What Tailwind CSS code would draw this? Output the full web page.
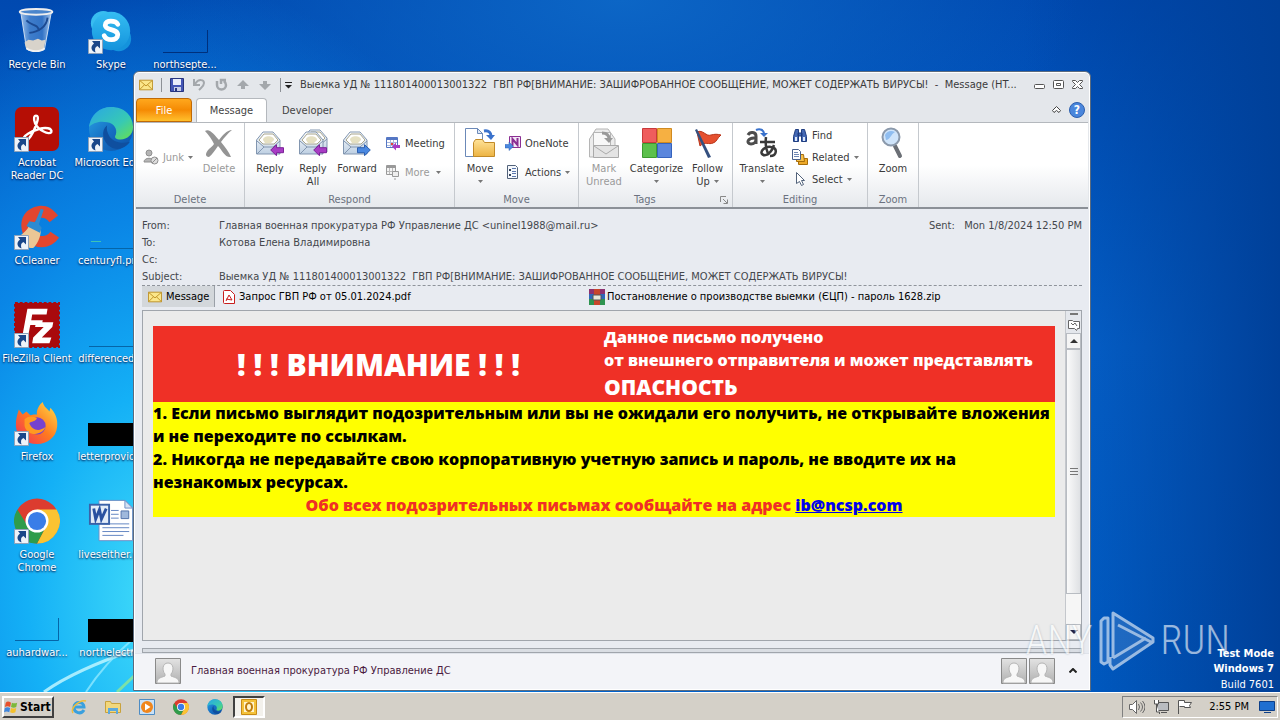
<!DOCTYPE html>
<html lang="en">
<head>
<meta charset="utf-8">
<title>Message (HTML)</title>
<script src="https://cdn.jsdelivr.net/npm/@tailwindcss/browser@4"></script>
</head>
<body class="relative flex h-screen flex-col overflow-hidden bg-[#0058c4] font-['DejaVu_Sans_Condensed','Noto_Sans',sans-serif] text-[11px] leading-[13px] text-[#3b3b3b]">

<svg class="absolute size-0">
  <defs>
    <linearGradient id="gEdge" x1="0" y1="0" x2="1" y2="1"><stop offset="0" stop-color="#2ba7e8"/><stop offset=".5" stop-color="#1670c4"/><stop offset="1" stop-color="#0c4fa5"/></linearGradient>
    <linearGradient id="gEdgeTop" x1="0" y1="0" x2="1" y2="1"><stop offset="0" stop-color="#2aa6e6"/><stop offset=".6" stop-color="#37c9b4"/><stop offset="1" stop-color="#69e04e"/></linearGradient>
    <linearGradient id="gSkype" x1="0" y1="0" x2="0" y2="1"><stop offset="0" stop-color="#35bdf2"/><stop offset="1" stop-color="#1493dc"/></linearGradient>
    <linearGradient id="gFox" x1="0" y1="1" x2="1" y2="0"><stop offset="0" stop-color="#f02a5e"/><stop offset=".5" stop-color="#ff7a1f"/><stop offset="1" stop-color="#ffe14a"/></linearGradient>
    <linearGradient id="gEnv" x1="0" y1="0" x2="0" y2="1"><stop offset="0" stop-color="#fdfeff"/><stop offset="1" stop-color="#bdcfe2"/></linearGradient>
    <linearGradient id="gFolder" x1="0" y1="0" x2="0" y2="1"><stop offset="0" stop-color="#ffe399"/><stop offset="1" stop-color="#ecb342"/></linearGradient>
    <linearGradient id="gGlass" x1="0" y1="0" x2="1" y2="0"><stop offset="0" stop-color="#b5d2f2"/><stop offset=".3" stop-color="#4a86cf"/><stop offset=".7" stop-color="#3a78c8"/><stop offset="1" stop-color="#c4dcf5"/></linearGradient>
    <linearGradient id="gPerson" x1="0" y1="0" x2="0" y2="1"><stop offset="0" stop-color="#e3e3e3"/><stop offset="1" stop-color="#b0b0b0"/></linearGradient>

    <symbol id="shortcut" viewBox="0 0 15 15"><path fill="#eef3f9" stroke="#8fa3bb" d="M.5.5h14v14H.5z"/><path fill="#1a4789" d="M4 2h8v7.500L9.500 7C7 8 6.500 10 7.500 13.500 3 12 2 7.500 6 4.500z"/></symbol>
    <symbol id="bin" viewBox="0 0 48 48"><path fill="url(#gGlass)" fill-opacity=".85" stroke="#cfe0f2" d="M7 4l6 38c1 4 18 4 19 0l7-38z"/><path fill="none" stroke="#1c4a92" stroke-width="2" d="M16 26c9-1 18-6 19-16M13 13c5 6 12 3 13 11"/><path fill="#d8d3cb" d="M11 36l4-3 5 1 5-2 4 2 4-1-2 10c-3 3-14 3-18 0z"/><path fill="none" stroke="#f1f1f1" stroke-width="2" d="M13 42c5 4 15 4 19 0"/><ellipse cx="23" cy="4" rx="17" ry="3" fill="#4b86cc" stroke="#eee" stroke-width="2"/></symbol>
    <symbol id="skype" viewBox="0 0 48 48"><circle cx="16" cy="16" r="13" fill="#38bdf0"/><circle cx="32" cy="32" r="13" fill="#1493dc"/><circle cx="24" cy="24" r="20" fill="url(#gSkype)"/><path fill="none" stroke="#fff" stroke-width="5" stroke-linecap="round" d="M31 17c-2-4-13-5-13 1 0 6 13 3 13 10 0 7-12 6-14 1"/></symbol>
    <symbol id="acrobat" viewBox="0 0 48 48"><rect x="1" y="1" width="46" height="46" rx="7" fill="#b50e05"/><path fill="none" stroke="#fff" stroke-width="2.500" d="M10 36c-2-5 9-10 16-12s14-1 13 3c-2 4-14-2-17-9-2-5-1-8 1-8 4 0 1 9-3 17-3 6-7 11-10 9z"/></symbol>
    <symbol id="edge" viewBox="0 0 48 48"><circle cx="24" cy="24" r="23" fill="url(#gEdge)"/><path fill="url(#gEdgeTop)" d="M1 22C3 9 12 1 24 1c14 0 23 9 23 21 0 8-6 13-13 13-5 0-7-2-5-5 2-6-2-12-9-13C12 15 4 18 1 22z"/><path fill="#0f4f9f" d="M20 20c-7 5-5 18 4 23 7 4 15 1 20-6-8 3-18 1-22-6-2-4-3-7-2-11z"/></symbol>
    <symbol id="ccleaner" viewBox="0 0 48 48"><path fill="#e2462f" d="M46 12C40 4 33 1 26 2 12 4 6 15 8 26c2 12 10 19 21 19 8 0 14-4 18-10l-9-6c-3 4-7 5-11 4-6-2-8-8-6-13 3-7 11-8 16-1z"/><path fill="#ebc795" d="M2 36c7-5 13-9 14-15l12 6c0 8-4 15-8 19C13 46 6 42 2 36z"/><path fill="#2c8bd2" d="M13 23l3-5 6 1 6-14 3 1-5 15 3 4-2 5z"/></symbol>
    <symbol id="filezilla" viewBox="0 0 48 48"><path fill="#a90a0d" stroke="#a90a0d" stroke-width="2" stroke-dasharray="3 2" d="M1 1h46v46H1z"/><path fill="#fff" d="M14 7h21l-1 6H19l-1 6h12l-1 5H17l-3 15H8zM23 21h18l-1 5-11 11h10l-2 6H19l1-6 11-11h-9z"/></symbol>
    <symbol id="firefox" viewBox="0 0 48 48"><path fill="url(#gFox)" d="M3 17l2-7 4 5 4-3 4 4c2-1 4-1 7-1-1-5 3-11 6-13 1 5 5 7 7 10l1-4c5 5 8 12 7 20-1 11-10 18-21 18C12 46 3 38 2 28c0-4 0-7 1-11z"/><circle cx="24" cy="27" r="9" fill="#7542cf"/><path fill="#ff9a21" d="M11 20c5-4 9-3 13-1-2 4-6 3-8 5 2 7 10 10 17 4-3 9-19 11-22-1z"/></symbol>
    <symbol id="chrome" viewBox="0 0 48 48"><circle cx="24" cy="24" r="23.500" fill="#dc3c2f"/><path fill="#fbc332" d="M44.500 12A23.500 23.500 0 0 1 24 47.500l9.500-18L24 12z"/><path fill="#2f9c4b" d="M24 47.500A23.500 23.500 0 0 1 3.500 12l11 17.500 19 0z"/><circle cx="24" cy="24" r="12" fill="#fff"/><circle cx="24" cy="24" r="9.500" fill="#3a7de8"/></symbol>
    <symbol id="word" viewBox="0 0 48 48"><path fill="#fff" stroke="#6f8fc4" d="M11.500 2.500h27l8 8v34h-35z"/><path fill="#d6e2f3" stroke="#6f8fc4" d="M38.500 2.500v8h8z"/><path stroke="#5f83c0" d="M24 13h8m-8 4h8m-8 4h8M15 27h28M15 31h28M15 35h28M15 39h22"/><path fill="#9fb8dc" stroke="#5272aa" d="M34.500 13.500h8v8h-8z"/><rect x="2" y="7" width="20" height="20" fill="#e3ecf8" stroke="#3b62a8" stroke-width="2"/><path fill="none" stroke="#2a51a0" stroke-width="3" d="M6 11l2 11 4-10 2 10 5-11"/></symbol>

    <symbol id="envelope" viewBox="0 0 16 12"><path fill="#fbe68a" stroke="#b98a1d" d="M.5.5h15v11H.5z"/><path fill="none" stroke="#b98a1d" d="M1 1l7 6 7-6M1 11l5-5m9 5l-5-5"/></symbol>
    <symbol id="openEnv" viewBox="0 0 32 32"><path fill="url(#gEnv)" stroke="#8296b0" d="M2.500 13L9 5h10l7 8v14h-23.500z"/><path fill="#fff" stroke="#a9a68e" d="M5 13l5-6h9l5 6-4 4H9z"/><path fill="#e5e0c2" d="M9 13c0-5 11-5 11 0l-3 3h-6z"/><path fill="none" stroke="#8296b0" d="M3 14l7 6h9l7-6M3 27l7-7m9 0l7 7"/></symbol>
    <symbol id="arrowL" viewBox="0 0 14 12"><path fill="#a83cc4" stroke="#7c2398" d="M.7 6L6.500.7v3h7v5h-7v3z"/></symbol>
    <symbol id="arrowR" viewBox="0 0 14 12"><path fill="#4a88e0" stroke="#2c5fb0" d="M13.300 6L7.500.7v3h-7v5h7v3z"/></symbol>
    <symbol id="person" viewBox="0 0 26 26"><path fill="url(#gPerson)" stroke="#8a8a8a" d="M.5.5h25v25H.5z"/><path fill="#f7f7f7" stroke="#b5b5b5" d="M2 25c0-5 3-5 8-7v-2c-3-3-3-11 3-11s6 8 3 11v2c5 2 8 2 8 7z"/></symbol>
    <symbol id="caret" viewBox="0 0 5 3"><path fill="#777" d="M0 0h5L2.500 3z"/></symbol>
  </defs>
</svg>

<!-- Desktop -->
<main class="relative min-h-0 flex-1 overflow-hidden bg-linear-to-b from-[#0049b0] via-[#0566d2] to-[#0061cc]">
  <div class="absolute inset-0 bg-[radial-gradient(ellipse_420px_620px_at_170px_600px,#45e0fa_0%,#14b0f6_34%,#0a86e6_62%,transparent_100%)]"></div>
  <div class="absolute inset-0 bg-[radial-gradient(ellipse_460px_200px_at_620px_0px,#0c66c6_0%,transparent_100%)]"></div>
  <div class="absolute inset-0 bg-linear-to-r from-transparent from-80% to-[#004099]"></div>
  <svg class="absolute bottom-0 left-0 h-[120px] w-[140px]" viewBox="0 0 140 120" fill="none"><path stroke="#bdf4ff" stroke-width="3" stroke-opacity=".85" d="M44 120Q75 98 134 78"/><path stroke="#8fe9ff" stroke-width="2" stroke-opacity=".8" d="M86 120Q104 92 134 66"/><path stroke="#8be59a" stroke-width="3" stroke-opacity=".85" d="M117 120l17-16"/></svg>

  <ul class="relative grid w-[222px] auto-cols-[74px] grid-flow-col grid-rows-[repeat(7,98px)] pt-2 text-center text-white [text-shadow:0_1px_2px_#003] [&_li]:flex [&_li]:flex-col [&_li]:items-center [&_li]:gap-1 [&_span]:whitespace-nowrap [&_svg]:size-[46px] [&_div]:relative [&_div>svg+svg]:absolute [&_div>svg+svg]:bottom-0 [&_div>svg+svg]:left-0 [&_div>svg+svg]:size-[15px]">
    <li><div><svg><use href="#bin"/></svg></div><span>Recycle Bin</span></li>
    <li><div><svg><use href="#acrobat"/></svg><svg><use href="#shortcut"/></svg></div><span>Acrobat<br>Reader DC</span></li>
    <li><div><svg><use href="#ccleaner"/></svg><svg><use href="#shortcut"/></svg></div><span>CCleaner</span></li>
    <li><div><svg><use href="#filezilla"/></svg><svg><use href="#shortcut"/></svg></div><span>FileZilla Client</span></li>
    <li><div><svg><use href="#firefox"/></svg><svg><use href="#shortcut"/></svg></div><span>Firefox</span></li>
    <li><div><svg><use href="#chrome"/></svg><svg><use href="#shortcut"/></svg></div><span>Google<br>Chrome</span></li>
    <li><div><svg viewBox="0 0 46 46"><path fill="none" stroke="#0565a8" d="M1 44.500h43.500V22"/></svg></div><span>auhardwar...</span></li>
    <li><div><svg><use href="#skype"/></svg><svg><use href="#shortcut"/></svg></div><span>Skype</span></li>
    <li><div><svg><use href="#edge"/></svg><svg><use href="#shortcut"/></svg></div><span>Microsoft Edge</span></li>
    <li><div><svg viewBox="0 0 46 46"><path fill="none" stroke="#0565a8" d="M2 44.500h44"/><path stroke="#3fc3b4" d="M3 37.500h10"/></svg></div><span>centuryfl.png</span></li>
    <li><div><svg viewBox="0 0 46 46"><path fill="none" stroke="#0565a8" d="M1 44.500h44"/></svg></div><span>differenced...</span></li>
    <li><div><svg viewBox="0 0 46 46"><path d="M0 23h46v23H0z"/></svg></div><span>letterprovid...</span></li>
    <li><div><svg><use href="#word"/></svg></div><span>liveseither.rtf</span></li>
    <li><div><svg viewBox="0 0 46 46"><path d="M0 23h46v23H0z"/></svg></div><span>northelectr...</span></li>
    <li><div><svg viewBox="0 0 46 46"><path fill="none" stroke="#00307c" d="M1 44.500h44.500V22"/></svg></div><span>northsepte...</span></li>
  </ul>

  <!-- Message window -->
  <section class="absolute bottom-px left-[133px] right-[189px] top-[71px] flex flex-col rounded-t-md border border-[#5b6b7f] bg-[#e4e7eb] px-px pb-px shadow-[inset_0_0_0_1px_white]">
    <header class="flex h-[25px] items-center gap-2 pl-1 pr-1.5 text-[#8f9499]">
      <svg class="h-3 w-3.5"><use href="#envelope"/></svg>
      <span class="h-3.5 w-px bg-[#8d9196]"></span>
      <button aria-label="Save"><svg class="size-3.5" viewBox="0 0 14 14"><path fill="#4356b5" stroke="#27357f" d="M.5.5h13v13H.5z"/><path fill="#e9edfa" d="M3 1h8v6H3z"/><path fill="#c7cde6" d="M4 9h7v4H4z"/><path fill="#27357f" d="M5 10h2v3H5z"/></svg></button>
      <button aria-label="Undo"><svg class="size-3.5" viewBox="0 0 14 14" fill="none" stroke="#a4a8ac" stroke-width="2"><path d="M2 1v6h6M3 6c4-6 9-4 9-1 0 3-2 4-5 7"/></svg></button>
      <button aria-label="Repeat"><svg class="size-3.5" viewBox="0 0 14 14" fill="none" stroke="#a4a8ac" stroke-width="2.500"><path d="M3 3v4c0 6 9 6 9 0 0-2-1-3-2-4M7 6V2h5"/></svg></button>
      <button aria-label="Previous item"><svg class="size-3.5" viewBox="0 0 14 14" fill="#a4a8ac"><path d="M7 2l6 6H9v3H5V8H1z"/></svg></button>
      <button aria-label="Next item"><svg class="size-3.5" viewBox="0 0 14 14" fill="#a4a8ac"><path d="M7 12l6-6H9V3H5v3H1z"/></svg></button>
      <button aria-label="Customize toolbar" class="flex h-3.5 items-center border-l border-[#8d9196] pl-1"><svg class="h-2 w-[7px]" viewBox="0 0 7 8"><path fill="#222" d="M0 1h7v1H0zM0 4h7L3.500 7.500z"/></svg></button>
      <h1 class="min-w-0 flex-1 truncate whitespace-pre text-[#3b3b3b]">Выемка УД № 111801400013001322  ГВП РФ[ВНИМАНИЕ: ЗАШИФРОВАННОЕ СООБЩЕНИЕ, МОЖЕТ СОДЕРЖАТЬ ВИРУСЫ!  -  Message (HT...</h1>
      <button aria-label="Minimize"><svg class="h-3 w-[11px]" viewBox="0 0 11 12"><rect x=".5" y="5.500" width="10" height="4" rx="1" fill="#fff" stroke="#555"/></svg></button>
      <button aria-label="Maximize"><svg class="h-3 w-[11px]" viewBox="0 0 11 12"><rect x=".5" y="1.500" width="10" height="8" rx="1" fill="#fff" stroke="#555"/><path fill="none" stroke="#555" d="M3.500 4.500h4v2h-4z"/></svg></button>
      <button aria-label="Close"><svg class="h-3 w-[11px]" viewBox="0 0 11 12"><path fill="#fff" stroke="#555" d="M.5 1.500h3l2 2 2-2h3v1L7.500 5.500l3 3v1h-3l-2-2-2 2h-3v-1l3-3-3-3z"/></svg></button>
    </header>

    <nav class="flex h-[25px] items-end pl-px pr-1 text-[#444]">
      <button class="h-6 w-[56px] rounded-t-sm border border-[#c06a06] bg-linear-to-b from-[#ffa81c] via-[#f58a02] to-[#ffc02a] text-white">File</button>
      <button class="ml-1 h-6 w-[71px] rounded-t-sm border border-b-0 border-[#b4b8bd] bg-white">Message</button>
      <button class="h-6 px-[15px]">Developer</button>
      <span class="flex-1"></span>
      <button aria-label="Minimize ribbon" class="mb-2 mr-2"><svg class="h-2 w-[9px]" viewBox="0 0 9 8"><path fill="#fff" stroke="#444" d="M.5 4.500l4-4 4 4-1.500 2-2.500-2-2.500 2z"/></svg></button>
      <button aria-label="Help" class="mb-1 size-4 rounded-full border border-[#2c5fae] bg-[#4a86dc] text-xs font-bold leading-[14px] text-white">?</button>
    </nav>

    <!-- Ribbon -->
    <div class="mx-px flex h-[87px] shrink-0 border-b-2 border-t border-b-[#8b9097] border-t-[#b4b8bd] bg-linear-to-b from-white from-50% to-[#e6e9ed] [&>div]:flex [&>div]:flex-col [&>div]:justify-between [&>div]:border-r [&>div]:border-[#c5c9ce] [&_h2]:pb-px [&_h2]:text-center [&_h2]:text-[#6b7280] [&_button]:whitespace-nowrap">
      <div class="w-[109px]">
        <div class="flex items-start">
          <button class="mt-[26px] flex w-[60px] items-center justify-center gap-1 pl-1 text-[#9a9a9a]"><svg class="size-4" viewBox="0 0 16 16" fill="#b5b5b5" stroke="#909090"><circle cx="6" cy="4" r="3"/><path d="M1 13c0-5 10-5 10 0z"/><circle cx="11.500" cy="11.500" r="3.500" fill="#ddd"/><path d="M9 14l5-5"/></svg>Junk<svg class="h-[3px] w-[5px]"><use href="#caret"/></svg></button>
          <button class="flex w-[46px] flex-col items-center gap-[3px] pt-1 text-[#9a9a9a]"><svg class="size-8" viewBox="0 0 32 32"><path fill="#949494" d="M2 4c5-3 10 5 14 9 3-4 8-10 13-10-4 3-8 8-11 12 4 5 8 10 10 15-6 1-9-7-13-11-3 4-6 9-9 11-4 0-4-4 0-8 2-2 4-3 5-5C9 13 6 8 2 4z"/></svg>Delete</button>
        </div>
        <h2>Delete</h2>
      </div>
      <div class="w-[210px]">
        <div class="flex items-start">
          <button class="flex w-[50px] flex-col items-center gap-[3px] pt-1"><svg class="size-8" viewBox="0 0 32 32"><use href="#openEnv" width="32" height="32"/><use href="#arrowL" x="16" y="17" width="14" height="12"/></svg>Reply</button>
          <button class="flex w-9 flex-col items-center gap-[3px] pt-1"><svg class="size-8" viewBox="0 0 32 32"><use href="#openEnv" x="4" y="-2" width="32" height="32"/><use href="#openEnv" width="32" height="32"/><use href="#arrowL" x="16" y="17" width="14" height="12"/></svg>Reply<br>All</button>
          <button class="flex w-[52px] flex-col items-center gap-[3px] pt-1"><svg class="size-8" viewBox="0 0 32 32"><use href="#openEnv" width="32" height="32"/><use href="#arrowR" x="16" y="17" width="14" height="12"/></svg>Forward</button>
          <div class="flex flex-col items-start gap-[13px] pl-0.5 pt-3">
            <button class="flex items-center gap-1"><svg class="size-4" viewBox="0 0 16 16"><path fill="#fff" stroke="#5577c4" d="M1.500 2.500h11v10h-11z"/><path fill="#5577c4" d="M2 3h10v2H2z"/><path stroke="#a9b9de" d="M2 7.500h10M2 10.500h10M5.500 5v7M8.500 5v7"/><path fill="#e8403a" d="M6 8h2v2H6z"/><path fill="#a83cc4" d="M7 11.500l4-4V10h4v3h-4v2.500z"/></svg>Meeting</button>
            <button class="flex items-center gap-1 text-[#9a9a9a]"><svg class="size-4" viewBox="0 0 16 16"><path fill="#f4f4f4" stroke="#999" d="M1.500 1.500h9v9h-9z"/><path fill="#999" d="M2 2h8v2H2z"/><path stroke="#bbb" d="M2 7.500h8M4.500 4v6M7.500 4v6"/><path fill="#eee" stroke="#999" d="M7.500 7.500h6v5h-6zM10 14v2"/></svg>More<svg class="ml-0.5 h-[3px] w-[5px]"><use href="#caret"/></svg></button>
          </div>
        </div>
        <h2>Respond</h2>
      </div>
      <div class="w-[124px]">
        <div class="flex items-start">
          <button class="flex w-[50px] flex-col items-center gap-[3px] pt-1"><svg class="size-8" viewBox="0 0 32 32"><path fill="#fff" stroke="#6b89b8" d="M1.500 1.500h12l5 5v23h-17z"/><path fill="#dfe9f7" stroke="#6b89b8" d="M13.500 1.500v5h5z"/><path fill="url(#gFolder)" stroke="#c18a28" d="M9.500 15.500l2-3h7l2 3h10v14h-21z"/><path fill="none" stroke="#3a72cc" stroke-width="3" d="M20 4c5-1 7 2 7 5"/><path fill="#3a72cc" d="M22 8h9l-4 5z"/></svg>Move<svg class="mt-0.5 h-[3px] w-[5px]"><use href="#caret"/></svg></button>
          <div class="flex flex-col items-start gap-[13px] pt-3">
            <button class="flex items-center gap-1"><svg class="size-4" viewBox="0 0 16 16"><path fill="#f3e7f6" stroke="#8b2f93" d="M4.500 1.500h11v11h-11z"/><path fill="none" stroke="#8b2f93" stroke-width="2" d="M7.500 11V4l5 6V3"/><path fill="#4a88e0" stroke="#2c5fb0" stroke-width=".5" d="M0 9.500h4V7l4.500 4.500L4 15.500V13H0z"/></svg>OneNote</button>
            <button class="flex items-center gap-1"><svg class="size-4" viewBox="0 0 16 16"><path fill="#f5f8fc" stroke="#52627a" d="M2.500 1.500h8l2 2v11h-10z"/><path fill="#33425c" d="M4 5h2v2H4zm0 5h2v2H4z"/><path stroke="#5b77ad" d="M7 4.500h4M7 7.500h4M7 9.500h4M7 12.500h4"/></svg>Actions<svg class="h-[3px] w-[5px]"><use href="#caret"/></svg></button>
          </div>
        </div>
        <h2>Move</h2>
      </div>
      <div class="w-[154px]">
        <div class="flex items-start">
          <button class="flex w-[50px] flex-col items-center gap-[3px] pt-1 text-[#9a9a9a]"><svg class="size-8" viewBox="0 0 32 32"><path fill="#ececec" stroke="#b5b5b5" d="M1.500 12L8 2h12l7 10v18H1.500z"/><path fill="#f8f8f8" stroke="#b5b5b5" d="M5.500 5.500h17v14h-17z"/><path fill="#e4e4e4" stroke="#aaa" d="M5.500 18.500h25v12h-25z"/><path fill="none" stroke="#aaa" d="M6 19l12 8 12-8"/><path fill="none" stroke="#999" stroke-width="3" d="M14 6c5 0 7 2 7 6"/><path fill="#999" d="M16 11h9l-4 5z"/></svg>Mark<br>Unread</button>
          <button class="flex w-[55px] flex-col items-center gap-[3px] pt-1"><svg class="size-8" viewBox="0 0 32 32"><path fill="#ef5d5d" stroke="#c93a3a" d="M1.500 1.500h14v14h-14z"/><path fill="#f6b042" stroke="#d08a20" d="M16.500 1.500h14v14h-14z"/><path fill="#5cc04c" stroke="#3d9930" d="M1.500 16.500h14v14h-14z"/><path fill="#5a86dd" stroke="#3563bd" d="M16.500 16.500h14v14h-14z"/></svg>Categorize<svg class="mt-0.5 h-[3px] w-[5px]"><use href="#caret"/></svg></button>
          <button class="flex w-[47px] flex-col items-center pt-1"><svg class="mb-[3px] size-8" viewBox="0 0 32 32"><path fill="#e5502f" stroke="#b93418" d="M5 5c6-3 9 5 14 3 4-1 6-1 10 0-4 3-4 7-8 8-4 2-8-2-13 3z"/><path fill="#34507f" d="M3 3l2-1 14 28-3 1z"/></svg>Follow<span class="flex items-center gap-1">Up<svg class="h-[3px] w-[5px]"><use href="#caret"/></svg></span></button>
        </div>
        <h2 class="flex items-center justify-between pl-[55px] pr-1"><span>Tags</span><svg class="size-2" viewBox="0 0 8 8" fill="none" stroke="#888"><path d="M.5 6V.5H6M3 3l4 4M7.500 3.500v4h-4"/></svg></h2>
      </div>
      <div class="w-[135px]">
        <div class="flex items-start">
          <button class="flex w-[58px] flex-col items-center gap-[3px] pt-1"><svg class="size-8" viewBox="0 0 32 32" fill="none"><path stroke="#4d4d4d" stroke-width="3" d="M2 8c2-4 8-3 8 1v8m0-6c-9-1-10 6-5 6 3 0 5-2 5-5"/><path stroke="#3a72cc" stroke-width="2" d="M10 3c4-2 8 0 8 4"/><path fill="#3a72cc" d="M14 6h8l-4 4z"/><path stroke="#3a3a3a" stroke-width="2.500" d="M14 15h15M20 10c-1 8 0 13 3 18M28 18c-3 9-9 12-12 9-2-3 3-8 9-7 7 1 6 9-1 9"/></svg>Translate<svg class="mt-0.5 h-[3px] w-[5px]"><use href="#caret"/></svg></button>
          <div class="flex flex-col items-start gap-1.5 pl-px pt-1">
            <button class="flex items-center gap-1"><svg class="size-4" viewBox="0 0 16 16" fill="#4468b4" stroke="#1f3d80"><path d="M1.500 14.500v-5l2-7h3v12zM9.500 14.500v-12h3l2 7v5zM6 6h4v3H6z"/><path fill="#dce7fa" stroke="none" d="M3 10h2v4H3zm8 0h2v4h-2z"/></svg>Find</button>
            <button class="flex items-center gap-1"><svg class="size-4" viewBox="0 0 16 16"><path fill="#eda928" stroke="#a66d0a" d="M6.500 8.500h3l1 1h5v6h-9z"/><path fill="#f6bf48" stroke="#a66d0a" d="M4.500 5.500h7l1 7h-8z"/><path fill="#fff" stroke="#49618c" d="M.5.500h6l2 2v8h-8z"/><path stroke="#6f88b5" d="M2 3.500h4M2 5.500h5M2 7.500h5"/></svg>Related<svg class="h-[3px] w-[5px]"><use href="#caret"/></svg></button>
            <button class="flex items-center gap-1"><svg class="size-4" viewBox="0 0 16 16"><path fill="#fff" stroke="#52627a" d="M4.500 1.500v11l3-2 2 4 2-1-2-4h3z"/></svg>Select<svg class="h-[3px] w-[5px]"><use href="#caret"/></svg></button>
          </div>
        </div>
        <h2>Editing</h2>
      </div>
      <div class="w-[51px]">
        <button class="flex flex-col items-center gap-[3px] pt-1"><svg class="size-8" viewBox="0 0 32 32"><path stroke="#6b6f75" stroke-width="4" stroke-linecap="round" d="M18 19l5 10"/><circle cx="14" cy="10" r="8.500" fill="#cfe4fa" stroke="#8b99ab" stroke-width="2"/><path fill="#8fbdf0" d="M8 8c2-4 6-5 10-3-4 2-5 8-9 8z"/></svg>Zoom</button>
        <h2>Zoom</h2>
      </div>
    </div>

    <!-- Message header -->
    <div class="flex min-h-0 flex-1 flex-col bg-[#e8ebf1] px-[7px] pt-2">
      <dl class="grid grid-cols-[77px_1fr_auto] border-b border-dashed border-[#8f949b] leading-[17px] text-[#44474c]">
        <dt>From:</dt><dd>Главная военная прокуратура РФ Управление ДС &lt;uninel1988@mail.ru&gt;</dd><dd>Sent: &nbsp; Mon 1/8/2024 12:50 PM</dd>
        <dt>To:</dt><dd class="col-span-2">Котова Елена Владимировна</dd>
        <dt>Cc:</dt><dd class="col-span-2"></dd>
        <dt>Subject:</dt><dd class="col-span-2 whitespace-pre">Выемка УД № 111801400013001322  ГВП РФ[ВНИМАНИЕ: ЗАШИФРОВАННОЕ СООБЩЕНИЕ, МОЖЕТ СОДЕРЖАТЬ ВИРУСЫ!</dd>
      </dl>
      <div class="flex h-[21px] text-black">
        <button class="flex w-[73px] items-center gap-1 border-r border-[#9aa0a8] bg-[#d3d7db] pl-1.5"><svg class="h-3 w-3.5"><use href="#envelope"/></svg>Message</button>
        <a href="#pdf" class="ml-2 flex w-[366px] items-center gap-1"><svg class="h-3.5 w-3" viewBox="0 0 12 14"><path fill="#fff" stroke="#c81e1e" d="M1.500.5h6l4 4v9h-10q-1 0-1-1v-11q0-1 1-1z"/><path fill="none" stroke="#c81e1e" d="M3 11l3-6 3 5-6-1"/></svg>Запрос ГВП РФ от 05.01.2024.pdf</a>
        <a href="#zip" class="flex items-center gap-0.5"><svg class="size-4" viewBox="0 0 16 16"><path fill="#8d3170" d="M0 0h16v5H0z"/><path fill="#2f67ba" d="M0 5h16v5H0z"/><path fill="#2e9350" d="M0 10h16v6H0z"/><path fill="#c8452b" d="M5 0h6v16H5z"/><path fill="#e8e6d8" stroke="#555" d="M4 6h8v5H4z"/></svg>Постановление о производстве выемки (ЄЦП) - пароль 1628.zip</a>
      </div>

      <!-- Message body -->
      <div class="mt-[3px] flex min-h-0 flex-1 border border-[#a0a5ac] bg-[#ebebeb] font-['Open_Sans','Noto_Sans',sans-serif] text-[16px] font-extrabold leading-[23px] text-black">
        <article class="min-w-0 flex-1 px-2.5 pt-[15px]">
          <div class="grid h-[76px] grid-cols-2 items-center bg-[#ef3026] text-white">
            <p class="text-center text-[30px]">! ! ! ВНИМАНИЕ ! ! !</p>
            <p class="whitespace-nowrap">Данное письмо получено<br>от внешнего отправителя и может представлять<br><span class="text-[21px] leading-[30px]">ОПАСНОСТЬ</span></p>
          </div>
          <div class="bg-[#ffff00]">
            <p>1. Если письмо выглядит подозрительным или вы не ожидали его получить, не открывайте вложения и не переходите по ссылкам.</p>
            <p>2. Никогда не передавайте свою корпоративную учетную запись и пароль, не вводите их на незнакомых ресурсах.</p>
            <p class="text-center text-[#ef3026]">Обо всех подозрительных письмах сообщайте на адрес <a href="mailto:ib@ncsp.com" class="text-[#0000ee] underline">ib@ncsp.com</a></p>
          </div>
        </article>
        <div class="flex w-4 shrink-0 flex-col items-center border-l border-[#c4c7cc] bg-[#f6f6f6]">
          <div class="flex h-[22px] w-full flex-col items-center gap-1 bg-[#e4e7ec] pt-0.5"><span class="h-0.5 w-2 bg-[#777]"></span><svg class="size-3" viewBox="0 0 12 12" fill="#fff" stroke="#666"><path d="M.5 1.500h4l1 1h6v7h-2l-1 2-2-2h-6z"/><path d="M3 4l2 2 2-2 2 3"/></svg></div>
          <button aria-label="Scroll up" class="flex h-4 w-full shrink-0 items-center justify-center border border-[#b8bcc2] bg-[#f5f5f5]"><svg class="h-1 w-2" viewBox="0 0 8 4"><path fill="#333" d="M0 4h8L4 0z"/></svg></button>
          <div class="flex min-h-0 w-full flex-1 flex-col"><div class="flex basis-[89%] flex-col items-center justify-center gap-0.5 border border-[#b8bcc2] bg-linear-to-r from-[#fafafa] to-[#dfe1e4]"><i class="h-px w-2 bg-[#777]"></i><i class="h-px w-2 bg-[#777]"></i><i class="h-px w-2 bg-[#777]"></i></div></div>
          <button aria-label="Scroll down" class="flex h-4 w-full shrink-0 items-center justify-center border border-[#b8bcc2] bg-[#f5f5f5]"><svg class="h-1 w-2" viewBox="0 0 8 4"><path fill="#224" d="M0 0h8L4 4z"/></svg></button>
        </div>
      </div>
      <div class="mt-[7px] h-[5px] shrink-0 border border-[#a0a5ac] bg-[#d9dde3]"></div>
    </div>

    <!-- People pane -->
    <footer class="flex h-[36px] shrink-0 items-center gap-0.5 border-t border-[#dfe3ea] bg-[#f3f4f8] pb-0.5 pl-5 pr-3 text-[#4a1a40]">
      <svg class="size-[26px]"><use href="#person"/></svg>
      <span class="ml-2 flex-1">Главная военная прокуратура РФ Управление ДС</span>
      <svg class="size-[26px]"><use href="#person"/></svg>
      <svg class="size-[26px]"><use href="#person"/></svg>
      <button aria-label="Expand people pane" class="ml-3"><svg class="h-[5px] w-2" viewBox="0 0 8 5"><path fill="none" stroke="#222" stroke-width="2" d="M.5 4.500L4 1l3.500 3.500"/></svg></button>
    </footer>
  </section>

  <!-- Watermark -->
  <div class="absolute bottom-[20px] right-[50px] flex items-center font-['Roboto_Condensed','Roboto',sans-serif] text-[40px] font-light leading-[62px] text-white opacity-60">
    <span class="[text-shadow:0_0_2px_#8496a8]">ANY</span>
    <svg class="mx-1.5 h-[62px] w-[56px]" viewBox="0 0 56 62" fill="#ffffff33" stroke="#fff" stroke-width="3" stroke-linejoin="round"><path d="M14 48V3l40 25v4L14 59l-3-4V47M19 15l33 17M14 48l33-20"/><path d="M9 8H5L2 11v41l3 2 4-2z"/></svg>
    <span>RUN</span>
  </div>

  <div class="absolute bottom-0 right-1.5 text-right leading-[15px] text-white"><p class="font-bold">Test Mode</p><p class="font-bold">Windows 7</p><p class="mt-px">Build 7601</p></div>
</main>

<!-- Taskbar -->
<footer class="flex h-7 shrink-0 items-center border-t border-white bg-[#d4d0c8] px-0.5 text-black">
  <button class="flex h-[22px] w-[52px] items-center gap-0.5 border-2 border-b-[#404040] border-l-white border-r-[#404040] border-t-white text-xs font-bold"><svg class="size-3.5 shrink-0" viewBox="0 0 16 16"><path fill="#e8502c" d="M2 3c2-2 4-1 6 0L7 8C5 7 3 7 1 8z"/><path fill="#7cb83a" d="M9 3c2 1 4 1 6 0l-1 5c-2 1-4 1-6 0z"/><path fill="#3f86dd" d="M1 9c2-1 4-1 6 0l-1 5c-2-1-4-1-6 0z"/><path fill="#f4c02c" d="M8 9c2 1 4 1 6 0l-1 5c-2 1-4 1-6 0z"/></svg>Start</button>
  <div class="ml-[17px] flex items-center gap-[18px]">
    <button aria-label="Internet Explorer"><svg class="size-4" viewBox="0 0 16 16"><path fill="none" stroke="#3aa0de" stroke-width="3" d="M13 11c-3 5-10 3-10-3s10-6 10 0H4"/><path fill="none" stroke="#eebd3b" stroke-width="1.500" d="M2 14C-1 9 9 0 15 2"/></svg></button>
    <button aria-label="Explorer"><svg class="size-4" viewBox="0 0 16 16"><path fill="#f2d77c" stroke="#c9a23d" d="M.5 2.500h5l1 2h9v9H.5z"/><path fill="#5ea9dc" d="M3 9h10v6h-2v-3H5v3H3z"/></svg></button>
    <button aria-label="Media Player"><svg class="size-4" viewBox="0 0 16 16"><path fill="#c9e1f7" stroke="#4d8cc4" d="M.5.5h15v15H.5z"/><circle cx="8" cy="8" r="6" fill="#f0861c"/><path fill="#fff" d="M6 4.500L11.500 8 6 11.500z"/></svg></button>
    <button aria-label="Chrome"><svg class="size-4"><use href="#chrome"/></svg></button>
    <button aria-label="Edge"><svg class="size-4"><use href="#edge"/></svg></button>
  </div>
  <button aria-label="Outlook" class="ml-2.5 flex h-[22px] w-8 items-center justify-center border-2 border-b-white border-l-[#404040] border-r-white border-t-[#404040] bg-[#f3f1ec]"><svg class="size-4" viewBox="0 0 16 16"><path fill="#f4c23a" stroke="#c98b14" d="M.5.5h15v15H.5z"/><path fill="#fff3cb" d="M3 3h10v10H3z"/><ellipse cx="8" cy="8" rx="3" ry="4" fill="none" stroke="#c07d0c" stroke-width="2"/></svg></button>
  <span class="flex-1"></span>
  <div class="flex h-[22px] items-center gap-2 border border-b-white border-l-[#808080] border-r-white border-t-[#808080] pl-1.5 pr-0.5">
    <svg class="size-4" viewBox="0 0 16 16" fill="#fff" stroke="#666"><path d="M.5 5.500h3l4-4v13l-4-4h-3z"/><path fill="none" d="M9.500 5q2 3 0 6M11.500 3.500q4 4.500 0 9M13.500 2q5 6 0 12"/></svg>
    <svg class="size-4" viewBox="0 0 16 16" fill="#fff" stroke="#555"><path fill="#b9bcc0" d="M4.500 3.500h11v8h-11zM8 13.500h6"/><path d="M1.500 1v4h4V1M3.500 5v8h3v2"/></svg>
    <svg class="size-4" viewBox="0 0 16 16" fill="#fff" stroke="#555"><path d="M1.500 15V1.500h6v2h7l-2 3 1 2h-6v-1h-5"/></svg>
    <time class="pl-2 pr-0.5">2:55 PM</time>
    <svg class="h-3 w-4" viewBox="0 0 16 12"><path fill="#1f6fd0" stroke="#0d3f88" d="M.5.5h15v9H.5z"/><path stroke="#0d3f88" d="M5 11.500h7"/></svg>
  </div>
</footer>
</body>
</html>
